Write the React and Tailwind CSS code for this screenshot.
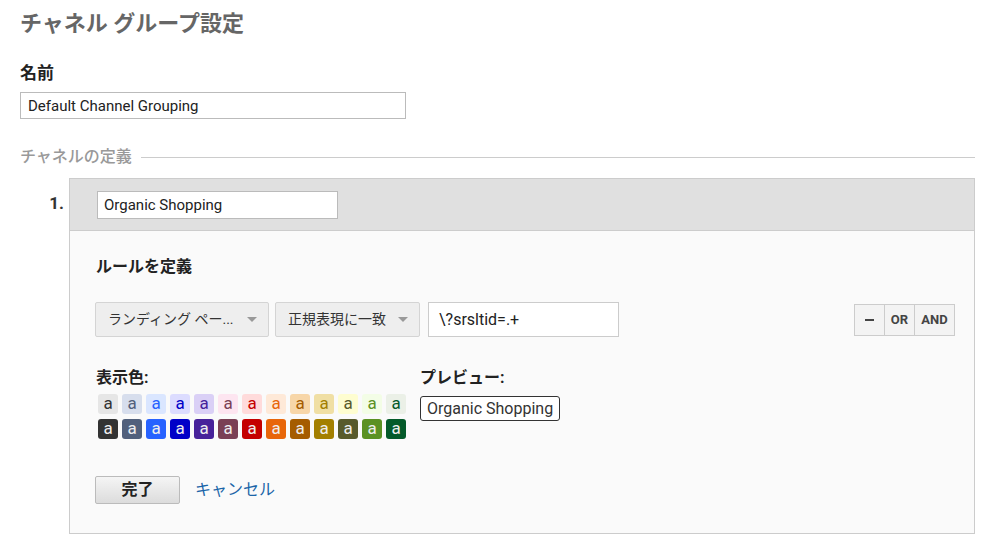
const FONT = { fontFamily: 'Roboto, "Noto Sans CJK JP", "Liberation Sans", sans-serif' };

const LIGHT = [
    ['#e6e6e6', '#333333'],
    ['#d7deed', '#51607c'],
    ['#dae6ff', '#2762ff'],
    ['#dcdcff', '#0000c8'],
    ['#dad0f6', '#47229a'],
    ['#fde5f0', '#7a4055'],
    ['#ffdbdb', '#c40000'],
    ['#fee9d8', '#e8660a'],
    ['#f7d6a8', '#a55c00'],
    ['#f0dfa4', '#a37f00'],
    ['#fefdd0', '#585a2b'],
    ['#f3fde6', '#5b9123'],
    ['#ebf0e7', '#045a2a'],
];

const DARK = [
    '#333333',
    '#51607c',
    '#2762ff',
    '#0000c8',
    '#47229a',
    '#7a4055',
    '#c40000',
    '#e8660a',
    '#a55c00',
    '#a37f00',
    '#585a2b',
    '#5b9123',
    '#045a2a',
];

function Swatch({ bg, fg }) {
    return (
        <div
            className="w-[20px] h-[20px] rounded-[3px] flex items-center justify-center text-[17px] leading-none pb-[2px]"
            style={{ backgroundColor: bg, color: fg }}
        >
            a
        </div>
    );
}

function Select({ label, width }) {
    return (
        <div
            className={`${width} h-[35px] flex items-center justify-between pl-[12px] pr-[11px] border border-[#d4d4d4] rounded-[2px] bg-[#eeeeee] text-[14px] text-[#333]`}
        >
            <span>{label}</span>
            <svg width="10" height="6" viewBox="0 0 10 6">
                <path d="M0 0 L10 0 L5 5 Z" fill="#999" />
            </svg>
        </div>
    );
}

export default function App() {
    return (
        <div className="w-[988px] h-[545px] bg-white overflow-hidden pl-[20px] pr-[13px]" style={FONT}>
            <h1 className="pt-[10px] text-[22px] leading-[28px] font-semibold text-[#666]">
                チャネル グループ設定
            </h1>
            <div className="mt-[24px] text-[17px] leading-[22px] font-bold text-[#222]">名前</div>
            <input
                readOnly
                value="Default Channel Grouping"
                className="mt-[8px] block w-[386px] h-[27px] px-[7px] border border-[#bbb] text-[15px] text-[#222] outline-none"
            />

            <div className="mt-[27px] flex items-center gap-[9px]">
                <span className="text-[16px] leading-[22px] font-medium text-[#999]">チャネルの定義</span>
                <div className="flex-1 h-px bg-[#ccc]" />
            </div>

            <div className="mt-[10px] flex">
                <div className="w-[49px] pt-[13px] pr-[5px] text-right text-[17px] font-bold text-[#333]">1.</div>
                <div className="flex-1 border border-[#ccc]">
                    <div className="h-[52px] bg-[#e0e0e0] border-b border-[#ccc] flex items-center pl-[27px]">
                        <input
                            readOnly
                            value="Organic Shopping"
                            className="w-[241px] h-[28px] px-[6px] bg-white border border-[#bbb] text-[15px] text-[#222] outline-none"
                        />
                    </div>
                    <div className="bg-[#fafafa] pl-[25px] pr-[19px] pt-[25px] pb-[29px]">
                        <div className="pl-[1px] text-[16px] leading-[22px] font-bold text-[#222]">ルールを定義</div>
                        <div className="mt-[24px] flex items-center">
                            <Select label="ランディング ペー..." width="w-[174px]" />
                            <div className="ml-[6px]">
                                <Select label="正規表現に一致" width="w-[145px]" />
                            </div>
                            <div className="ml-[8px] w-[191px] h-[35px] flex items-center px-[10px] bg-white border border-[#ccc] text-[16px] text-[#222]">
                                \?srsltid=.+
                            </div>
                            <div className="ml-auto flex h-[32px] border border-[#ccc] bg-[#f3f3f3] text-[13px] font-bold text-[#444]">
                                <div className="w-[30px] flex items-center justify-center border-r border-[#ccc]">
                                    <div className="w-[9px] h-[2px] bg-[#444]" />
                                </div>
                                <div className="w-[30px] flex items-center justify-center border-r border-[#ccc]">OR</div>
                                <div className="w-[39px] flex items-center justify-center">AND</div>
                            </div>
                        </div>

                        <div className="mt-[30px] flex">
                            <div className="w-[325px] pl-[1px]">
                                <div className="text-[16px] leading-[22px] font-bold text-[#222]">表示色:</div>
                                <div className="mt-[5px] pl-[2px] flex gap-[4px]">
                                    {LIGHT.map(([bg, fg]) => (
                                        <Swatch key={bg} bg={bg} fg={fg} />
                                    ))}
                                </div>
                                <div className="mt-[5px] pl-[2px] flex gap-[4px]">
                                    {DARK.map((bg) => (
                                        <Swatch key={bg} bg={bg} fg="#eeeeee" />
                                    ))}
                                </div>
                            </div>
                            <div>
                                <div className="text-[16px] leading-[22px] font-bold text-[#222]">プレビュー:</div>
                                <div className="mt-[7px] inline-flex h-[25px] items-center px-[6px] border border-[#333] rounded-[3px] text-[16px] text-[#333] bg-white">
                                    Organic Shopping
                                </div>
                            </div>
                        </div>

                        <div className="mt-[37px] flex items-center">
                            <button className="w-[85px] h-[28px] border border-[#bbb] rounded-[2px] bg-gradient-to-b from-[#f5f5f5] to-[#dcdcdc] text-[16px] font-bold text-[#222]">
                                完了
                            </button>
                            <span className="ml-[15px] text-[16px] text-[#1a65a8]">キャンセル</span>
                        </div>
                    </div>
                </div>
            </div>
        </div>
    );
}
